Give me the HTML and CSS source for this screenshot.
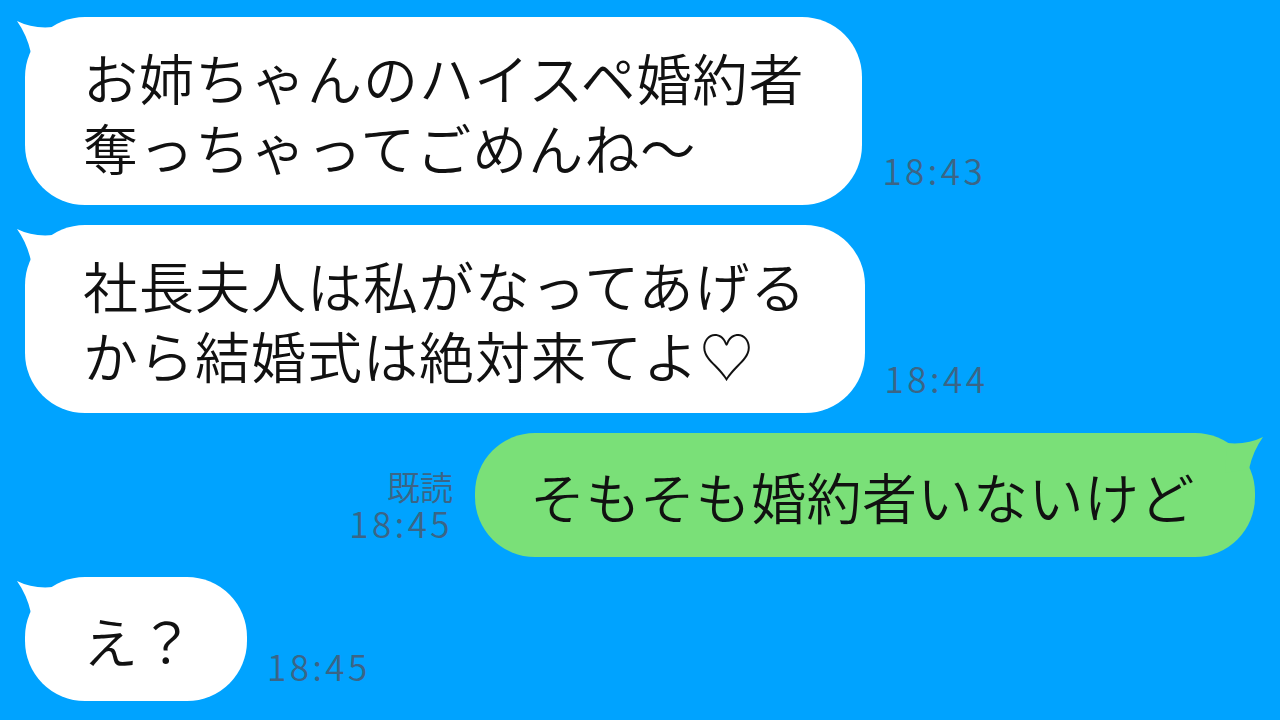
FILE: index.html
```html
<!doctype html>
<html lang="ja">
  <head>
    <meta charset="UTF-8" />
    <meta name="viewport" content="width=device-width, initial-scale=1.0" />
    <title>トーク</title>
    <link rel="stylesheet" href="styles.css">
  </head>
  <body>
    <main class="chat">
      <div class="row in">
        <div class="bubble">
          <svg class="tail" width="50" height="50" viewBox="0 0 50 50"><path d="M4 4 Q20 12 40 10 L42 40 L18 36 Q14 18 4 4 Z" /></svg>
          <p>お姉ちゃんのハイスペ婚約者<br>奪っちゃってごめんね～</p>
        </div>
        <span class="time">18:43</span>
      </div>

      <div class="row in">
        <div class="bubble">
          <svg class="tail" width="50" height="50" viewBox="0 0 50 50"><path d="M4 4 Q20 12 40 10 L42 40 L18 36 Q14 18 4 4 Z" /></svg>
          <p>社長夫人は私がなってあげる<br>から結婚式は絶対来てよ♡</p>
        </div>
        <span class="time">18:44</span>
      </div>

      <div class="row out">
        <div class="meta">
          <span class="read">既読</span>
          <span class="time">18:45</span>
        </div>
        <div class="bubble green single">
          <svg class="tail" width="50" height="50" viewBox="0 0 50 50"><path d="M46 4 Q30 12 10 10 L8 40 L32 36 Q36 18 46 4 Z" /></svg>
          <p>そもそも婚約者いないけど</p>
        </div>
      </div>

      <div class="row in">
        <div class="bubble single short">
          <svg class="tail" width="50" height="50" viewBox="0 0 50 50"><path d="M4 4 Q20 12 40 10 L42 40 L18 36 Q14 18 4 4 Z" /></svg>
          <p>え？</p>
        </div>
        <span class="time">18:45</span>
      </div>
    </main>
  </body>
</html>
```

FILE: styles.css
```css
:root {
  --bg: #00a3ff;
  --bubble: #ffffff;
  --bubble-green: #7ae078;
  --time: #3b6586;
}

* {
  box-sizing: border-box;
}

body {
  margin: 0;
  background: var(--bg);
  font-family: "Noto Sans CJK JP", "Noto Sans", sans-serif;
  font-weight: 350;
  color: #111;
}

.chat {
  display: flex;
  flex-direction: column;
  gap: 20px;
  padding: 17px 25px;
  height: 720px;
  overflow: hidden;
}

.row {
  display: flex;
  align-items: flex-end;
  gap: 20px;
}

.row.out {
  justify-content: flex-end;
  gap: 22px;
}

.bubble {
  position: relative;
  background: var(--bubble);
  border-radius: 60px;
  padding: 24px 58px;
}

.bubble.single {
  padding: 27px 58px;
}

.bubble.short {
  padding-right: 52px;
}

.bubble.green {
  background: var(--bubble-green);
  padding-left: 55px;
  padding-right: 60px;
}

.bubble p {
  margin: 0;
  font-size: 55px;
  line-height: 70px;
  letter-spacing: 1px;
  white-space: nowrap;
}

.green p {
  letter-spacing: 0.5px;
}

.tail {
  position: absolute;
  top: 0;
  left: -12px;
  fill: var(--bubble);
}

.green .tail {
  left: auto;
  right: -12px;
  fill: var(--bubble-green);
}

.time {
  font-size: 35px;
  line-height: 34px;
  letter-spacing: 3.5px;
  color: var(--time);
  margin-bottom: 18px;
}

.meta {
  display: flex;
  flex-direction: column;
  align-items: flex-end;
}

.meta .time {
  margin-bottom: 17px;
}

.read {
  font-size: 33px;
  line-height: 36px;
  color: var(--time);
  margin-bottom: 2px;
}
```
